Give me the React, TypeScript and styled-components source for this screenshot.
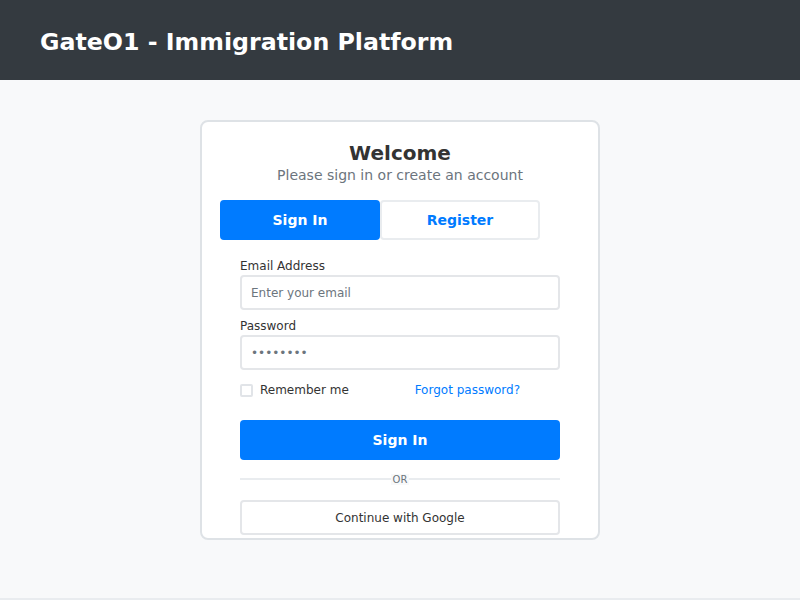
import React, { useState } from 'react';
import styled, { createGlobalStyle } from 'styled-components';

const GlobalStyle = createGlobalStyle`
  * {
    box-sizing: border-box;
  }

  body {
    margin: 0;
    font-family: "DejaVu Sans", "Liberation Sans", sans-serif;
    color: #333;
    background: #f8f9fa;
  }
`;

export default function App() {
  const [tab, setTab] = useState<'signin' | 'register'>('signin');

  return (
    <>
      <GlobalStyle />
      <Header>
        <Brand>GateO1 - Immigration Platform</Brand>
      </Header>
      <Main>
        <Card>
          <Title>Welcome</Title>
          <Subtitle>Please sign in or create an account</Subtitle>
          <Tabs>
            <Tab type="button" $active={tab === 'signin'} onClick={() => setTab('signin')}>
              Sign In
            </Tab>
            <Tab type="button" $active={tab === 'register'} onClick={() => setTab('register')}>
              Register
            </Tab>
          </Tabs>
          <Form onSubmit={(e) => e.preventDefault()}>
            <Field>
              <Label htmlFor="email">Email Address</Label>
              <Input id="email" type="email" placeholder="Enter your email" />
            </Field>
            <Field>
              <Label htmlFor="password">Password</Label>
              <Input id="password" type="password" placeholder="••••••••" />
            </Field>
            <OptionsRow>
              <CheckLabel>
                <Checkbox type="checkbox" />
                Remember me
              </CheckLabel>
              <Link href="#">Forgot password?</Link>
            </OptionsRow>
            <SubmitButton type="submit">Sign In</SubmitButton>
            <Divider>
              <span>OR</span>
            </Divider>
            <GoogleButton type="button">Continue with Google</GoogleButton>
          </Form>
        </Card>
      </Main>
    </>
  );
}

const Header = styled.header`
  display: flex;
  align-items: center;
  height: 80px;
  padding: 4px 40px 0;
  background: #343a40;
`;

const Brand = styled.h1`
  margin: 0;
  font-size: 23.7px;
  font-weight: bold;
  color: #fff;
`;

const Main = styled.main`
  display: flex;
  justify-content: center;
  height: 520px;
  padding-top: 40px;
  background: #f8f9fa;
  border-bottom: 2px solid #e9ecef;
`;

const Card = styled.div`
  width: 400px;
  height: 420px;
  padding: 18px;
  background: #fff;
  border: 2px solid #dee2e6;
  border-radius: 8px;
  overflow: hidden;
`;

const Title = styled.h2`
  margin: 0;
  font-size: 20px;
  line-height: 26px;
  font-weight: bold;
  text-align: center;
  color: #333;
`;

const Subtitle = styled.p`
  margin: 1px 0 16px;
  font-size: 14px;
  line-height: 17px;
  text-align: center;
  color: #6c757d;
`;

const Tabs = styled.div`
  display: flex;
  width: 320px;
`;

const Tab = styled.button<{ $active: boolean }>`
  flex: 1;
  height: 40px;
  font-family: inherit;
  font-size: 14px;
  font-weight: bold;
  border-radius: 4px;
  cursor: pointer;
  border: 2px solid ${(p) => (p.$active ? '#007bff' : '#e9ecef')};
  background: ${(p) => (p.$active ? '#007bff' : '#fff')};
  color: ${(p) => (p.$active ? '#fff' : '#007bff')};
`;

const Form = styled.form`
  display: flex;
  flex-direction: column;
  padding: 20px 20px 0;
`;

const Field = styled.div`
  display: flex;
  flex-direction: column;

  & + & {
    margin-top: 10px;
  }
`;

const Label = styled.label`
  margin-bottom: 2px;
  font-size: 12px;
  line-height: 13px;
  color: #333;
`;

const Input = styled.input`
  height: 35px;
  padding: 0 9px;
  font-family: inherit;
  font-size: 12px;
  color: #333;
  border: 2px solid #e4e6e9;
  border-radius: 4px;
  outline: none;

  &::placeholder {
    color: #6c757d;
  }
`;

const OptionsRow = styled.div`
  display: flex;
  align-items: center;
  justify-content: space-between;
  height: 18px;
  margin-top: 11px;
  padding-right: 40px;
`;

const CheckLabel = styled.label`
  display: flex;
  align-items: center;
  gap: 7px;
  font-size: 12px;
  color: #333;
`;

const Checkbox = styled.input`
  appearance: none;
  width: 13px;
  height: 13px;
  margin: 0;
  border: 2px solid #e1e4e8;
  border-radius: 2px;
  background: #fff;
`;

const Link = styled.a`
  font-size: 12px;
  color: #007bff;
  text-decoration: none;
`;

const SubmitButton = styled.button`
  height: 40px;
  margin-top: 21px;
  font-family: inherit;
  font-size: 14px;
  font-weight: bold;
  color: #fff;
  background: #007bff;
  border: none;
  border-radius: 4px;
  cursor: pointer;
`;

const Divider = styled.div`
  display: flex;
  align-items: center;
  height: 18px;
  margin-top: 10px;
  font-size: 10px;
  color: #6c757d;

  &::before,
  &::after {
    content: '';
    flex: 1;
    height: 2px;
    background: #e9ecef;
  }

  span {
    padding: 0 2px;
    background: #f8f9fa;
  }
`;

const GoogleButton = styled.button`
  height: 35px;
  margin-top: 12px;
  font-family: inherit;
  font-size: 12px;
  color: #333;
  background: #fff;
  border: 2px solid #e4e6e9;
  border-radius: 4px;
  cursor: pointer;
`;
